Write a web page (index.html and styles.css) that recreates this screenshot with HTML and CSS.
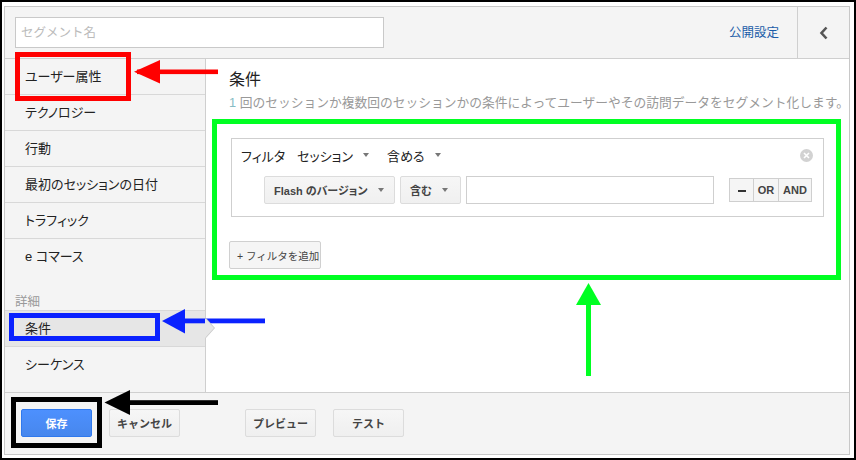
FILE: index.html
```html
<!DOCTYPE html>
<html lang="ja">
<head>
    <meta charset="UTF-8">
    <title>セグメント</title>
    <link rel="stylesheet" href="styles.css">
</head>
<body>
    <div class="frame">
        <div class="panel">
            <!-- ヘッダー -->
            <div class="header">
                <input class="seg-name" type="text" placeholder="セグメント名">
                <a class="share-link" href="#">公開設定</a>
                <div class="collapse">
                    <svg width="10" height="14" viewBox="0 0 10 14"><polyline points="7.5,1.5 2.5,7 7.5,12.5" fill="none" stroke="#555" stroke-width="2.6"/></svg>
                </div>
            </div>

            <div class="main">
                <!-- サイドメニュー -->
                <div class="side">
                    <ul class="side-list">
                        <li class="side-item">ユーザー属性</li>
                        <li class="side-item">テクノロジー</li>
                        <li class="side-item">行動</li>
                        <li class="side-item">最初のセッションの日付</li>
                        <li class="side-item">トラフィック</li>
                        <li class="side-item">e コマース</li>
                    </ul>
                    <div class="side-label">詳細</div>
                    <ul class="side-list side-adv">
                        <li class="side-item active">条件</li>
                        <li class="side-item">シーケンス</li>
                    </ul>
                </div>

                <!-- 条件エディタ -->
                <div class="content">
                    <h2 class="title">条件</h2>
                    <p class="desc"><span class="num">1</span> 回のセッションか複数回のセッションかの条件によってユーザーやその訪問データをセグメント化します。</p>

                    <div class="filter-box">
                        <div class="filter-head">
                            <span class="fh-label">フィルタ</span>
                            <span class="fh-drop">セッション<i class="caret"></i></span>
                            <span class="fh-drop">含める<i class="caret"></i></span>
                            <span class="remove">
                                <svg width="13" height="13" viewBox="0 0 13 13"><circle cx="6.5" cy="6.5" r="6.5" fill="#d2d2d2"/><path d="M4 4 L9 9 M9 4 L4 9" stroke="#fff" stroke-width="1.6"/></svg>
                            </span>
                        </div>
                        <div class="filter-row">
                            <div class="drop drop-dim"><span>Flash のバージョン</span><i class="caret"></i></div>
                            <div class="drop drop-op"><span>含む</span><i class="caret"></i></div>
                            <input class="value" type="text">
                            <div class="seg-btns">
                                <div class="seg-btn"><span class="minus"></span></div>
                                <div class="seg-btn">OR</div>
                                <div class="seg-btn seg-and">AND</div>
                            </div>
                        </div>
                    </div>

                    <button class="add-filter">+ フィルタを追加</button>
                </div>
            </div>

            <!-- フッター -->
            <div class="footer">
                <button class="btn btn-blue">保存</button>
                <button class="btn btn-cancel">キャンセル</button>
                <button class="btn btn-preview">プレビュー</button>
                <button class="btn btn-test">テスト</button>
            </div>
        </div>

        <!-- 注釈（枠と矢印） -->
        <svg class="notes" width="856" height="460" viewBox="0 0 856 460">
            <rect x="17.5" y="54.5" width="111" height="44" fill="none" stroke="#ff0000" stroke-width="5"/>
            <rect x="137" y="69.5" width="81" height="4.6" fill="#ff0000"/>
            <polygon points="134,71.8 160,60 160,83.5" fill="#ff0000"/>

            <rect x="11.5" y="315.5" width="146" height="23" fill="none" stroke="#0a22ff" stroke-width="5"/>
            <rect x="170" y="318.5" width="95" height="4.8" fill="#0a22ff"/>
            <polygon points="162,321 185,309 185,333.5" fill="#0a22ff"/>

            <rect x="13.5" y="399.5" width="86" height="46" fill="none" stroke="#000" stroke-width="5"/>
            <rect x="115" y="400.2" width="103" height="4.8" fill="#000"/>
            <polygon points="104.5,402.6 130,390 130,415" fill="#000"/>

            <rect x="214.5" y="121.5" width="624" height="156" fill="none" stroke="#00ff22" stroke-width="5"/>
            <rect x="586" y="300" width="5" height="76" fill="#00ff22"/>
            <polygon points="588.5,283 576,305 601,305" fill="#00ff22"/>
        </svg>
    </div>
</body>
</html>
```

FILE: styles.css
```css
body {
    margin: 0;
    font-family: "Liberation Sans", "Noto Sans CJK JP", sans-serif;
    font-feature-settings: "palt";
    color: #222;
    background: #fff;
}
ul {
    list-style: none;
    margin: 0;
    padding: 0;
}
.frame {
    position: relative;
    width: 856px;
    height: 460px;
    box-sizing: border-box;
    border: 2px solid #000;
    padding: 4px 0 0 2px;
}
.panel {
    width: 846px;
    height: 449px;
    box-sizing: border-box;
    border: 1px solid #c8c8c8;
    background: #f4f4f4;
    display: flex;
    flex-direction: column;
}
/* ヘッダー */
.header {
    height: 52px;
    flex: none;
    box-sizing: border-box;
    border-bottom: 1px solid #cfcfcf;
    display: flex;
    align-items: flex-start;
}
.seg-name {
    width: 369px;
    height: 31px;
    box-sizing: border-box;
    margin: 10px 0 0 10px;
    border: 1px solid #c9c9c9;
    padding: 0 5px;
    font-family: inherit;
    font-size: 12.5px;
    outline: none;
}
.seg-name::placeholder {
    color: #bbb;
}
.share-link {
    margin-left: auto;
    margin-right: 18px;
    align-self: center;
    color: #1a5ca8;
    text-decoration: none;
    font-size: 12.5px;
    line-height: 16px;
}
.collapse {
    width: 51px;
    height: 51px;
    border-left: 1px solid #cfcfcf;
    display: flex;
    align-items: center;
    justify-content: center;
}
/* 本体 */
.main {
    flex: 1;
    display: flex;
    min-height: 0;
}
.side {
    width: 201px;
    flex: none;
    box-sizing: border-box;
    border-right: 1px solid #cfcfcf;
    font-size: 13px;
}
.side-item {
    position: relative;
    height: 35px;
    line-height: 35px;
    padding-left: 20px;
    border-bottom: 1px solid #d8d8d8;
}
.side-item:last-child {
    border-bottom: none;
}
.side-label {
    height: 36px;
    box-sizing: border-box;
    padding: 20px 0 0 10px;
    line-height: 16px;
    font-size: 12.5px;
    color: #999;
}
.side-adv {
    border-top: 1px solid #d8d8d8;
}
.side-item.active {
    background: #e6e6e6;
    border-bottom: 1px solid #d8d8d8;
}
.side-item.active::after,
.side-item.active::before {
    content: "";
    position: absolute;
    top: 7px;
    border-style: solid;
    border-color: transparent;
    border-width: 10px 0 10px 9px;
    z-index: 2;
}
.side-item.active::before {
    right: -10px;
    border-left-color: #c8c8c8;
}
.side-item.active::after {
    right: -9px;
    border-left-color: #e6e6e6;
}
.content {
    flex: 1;
    min-width: 0;
    background: #fff;
    padding: 11px 25px 0 23px;
}
.title {
    margin: 0;
    font-size: 16px;
    font-weight: normal;
    line-height: 20px;
    color: #222;
}
.desc {
    margin: 5px 0 0;
    font-size: 12.75px;
    font-feature-settings: normal;
    line-height: 16px;
    color: #999;
    white-space: nowrap;
}
.desc .num {
    color: #86bcc4;
}
.filter-box {
    margin: 27px 0 0 2px;
    border: 1px solid #cfcfcf;
    padding: 6px 0 12px 9px;
}
.filter-head {
    display: flex;
    align-items: center;
    height: 20px;
    font-size: 13px;
}
.fh-label {
    margin-right: 12px;
}
.fh-drop {
    display: flex;
    align-items: center;
    margin-right: 18px;
}
.caret {
    display: inline-block;
    flex: none;
    width: 0;
    height: 0;
    border-style: solid;
    border-width: 4px 3.5px 0 3.5px;
    border-color: #777 transparent transparent transparent;
    margin-left: 10px;
}
.remove {
    margin-left: auto;
    margin-right: 10px;
    height: 13px;
}
.filter-row {
    display: flex;
    align-items: center;
    margin-top: 11px;
    padding-left: 23px;
}
.drop {
    height: 28px;
    box-sizing: border-box;
    display: flex;
    align-items: center;
    justify-content: space-between;
    padding: 0 9px;
    border: 1px solid #dcdcdc;
    border-radius: 2px;
    background: linear-gradient(#f6f6f6, #f0f0f0);
    font-size: 11px;
    font-weight: bold;
    color: #444;
    white-space: nowrap;
}
.drop .caret {
    margin-right: 3px;
}
.drop-dim {
    width: 131px;
}
.drop-op {
    width: 61px;
    margin-left: 5px;
}
.value {
    width: 248px;
    height: 28px;
    box-sizing: border-box;
    margin-left: 5px;
    border: 1px solid #cfcfcf;
    outline: none;
}
.seg-btns {
    display: flex;
    margin-left: 15px;
}
.seg-btn {
    width: 25px;
    height: 24px;
    box-sizing: border-box;
    border: 1px solid #cfcfcf;
    background: #f5f5f5;
    display: flex;
    align-items: center;
    justify-content: center;
    font-size: 11px;
    font-weight: bold;
    color: #444;
}
.seg-btn + .seg-btn {
    margin-left: -1px;
    width: 26px;
}
.seg-btn.seg-and {
    width: 34px;
}
.minus {
    width: 8px;
    height: 2px;
    background: #333;
    margin-top: 2px;
}
.add-filter {
    display: block;
    margin-top: 24px;
    width: 92px;
    height: 28px;
    padding: 0 0 0 7px;
    text-align: left;
    white-space: nowrap;
    border: 1px solid #d0d0d0;
    border-radius: 2px;
    background: #f5f5f5;
    font-family: inherit;
    font-size: 10.5px;
    color: #444;
}
/* フッター */
.footer {
    height: 62px;
    flex: none;
    box-sizing: border-box;
    border-top: 1px solid #cfcfcf;
    padding: 16px 0 0 16px;
    display: flex;
    align-items: flex-start;
}
.btn {
    width: 71px;
    height: 28px;
    padding: 0;
    border: 1px solid #dcdcdc;
    border-radius: 2px;
    background: linear-gradient(#f6f6f6, #efefef);
    font-family: inherit;
    font-size: 11px;
    font-weight: bold;
    color: #444;
}
.btn-blue {
    background: linear-gradient(#4d90fe, #4787ed);
    border-color: #3079ed;
    color: #fff;
}
.btn-cancel {
    margin-left: 17px;
}
.btn-preview {
    margin-left: 65px;
}
.btn-test {
    margin-left: 17px;
}
.notes {
    position: absolute;
    left: -2px;
    top: -2px;
    pointer-events: none;
}
```
